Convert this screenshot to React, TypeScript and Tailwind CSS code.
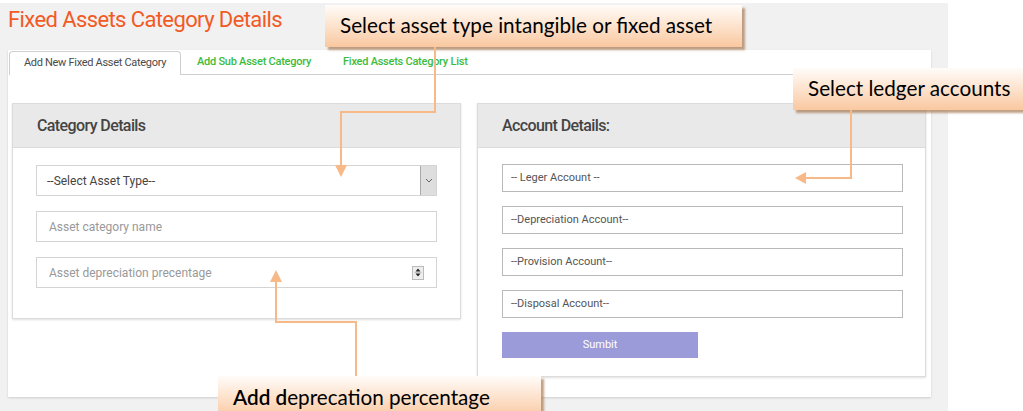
import { type ReactNode } from 'react';

const tabs = [
    { label: 'Add New Fixed Asset Category', active: true },
    { label: 'Add Sub Asset Category', active: false },
    { label: 'Fixed Assets Category List', active: false },
];

const accounts = ['-- Leger Account --', '--Depreciation Account--', '--Provision Account--', '--Disposal Account--'];

function Panel({ title, className, children }: { title: string; className: string; children: ReactNode }) {
    return (
        <div className={`w-[449px] border border-[#dcdcdc] bg-white shadow-[0_1px_2px_rgba(0,0,0,0.12)] ${className}`}>
            <div className="flex h-[44px] items-center border-b border-[#dcdcdc] bg-[#e9e9e9] pl-[24px] text-[16px] font-medium tracking-[-0.6px] text-[#444]">
                {title}
            </div>
            {children}
        </div>
    );
}

function Callout({ className, children }: { className: string; children: ReactNode }) {
    return (
        <div
            className={`absolute flex items-center bg-gradient-to-b from-[#fffcf9] to-[#f9c8a0] pl-[15px] font-['Lato'] text-[20.7px] text-black shadow-[3px_3px_2px_rgba(160,110,70,0.65)] ${className}`}
        >
            {children}
        </div>
    );
}

export default function App() {
    return (
        <div className="relative h-[411px] w-[1023px] overflow-hidden bg-white font-['Roboto',sans-serif]">
            <div className="mt-[3px] h-[408px] w-[948px] bg-[#f1f1f1] pl-[8px] pt-[4px]">
                {/* Page title */}
                <h1 className="h-[43px] text-[22px] leading-[26px] tracking-[-0.6px] text-[#f15a24]">
                    Fixed Assets Category Details
                </h1>

                {/* Main card */}
                <div className="h-[347px] w-[923px] bg-white shadow-[0_1px_2px_rgba(0,0,0,0.15)]">
                    <div className="ml-px mr-px flex h-[25px] items-end border-b border-[#cfcfcf] pt-px">
                        {tabs.map(tab =>
                            tab.active ? (
                                <div
                                    key={tab.label}
                                    className="-mb-px flex h-[24px] w-[172px] items-center justify-center rounded-t-[4px] border border-b-0 border-[#cfcfcf] bg-white text-[11px] tracking-[-0.3px] text-[#4a4a4a]"
                                >
                                    {tab.label}
                                </div>
                            ) : (
                                <div
                                    key={tab.label}
                                    className="flex h-[24px] items-center px-[16px] text-[11px] font-medium tracking-[-0.25px] text-[#3dbb3d]"
                                >
                                    {tab.label}
                                </div>
                            )
                        )}
                    </div>

                    <div className="flex items-start gap-[16px] pl-[4px] pt-[28px]">
                        {/* Category details */}
                        <Panel title="Category Details" className="h-[216px]">
                            <div className="flex flex-col gap-[15px] pl-[23px] pt-[17px]">
                                <div className="flex h-[31px] w-[401px] items-center justify-between border border-[#d4d4d4] pl-[10px] text-[12px] text-[#444]">
                                    <span>--Select Asset Type--</span>
                                    <span className="flex h-[29px] w-[16px] items-center justify-center border-l border-[#a9a9a9] bg-[#dedede]">
                                        <svg width="8" height="5" viewBox="0 0 8 5">
                                            <path d="M1 1l3 3 3-3" fill="none" stroke="#666" strokeWidth="1" />
                                        </svg>
                                    </span>
                                </div>
                                <div className="flex h-[31px] w-[401px] items-center border border-[#d4d4d4] pl-[12px] text-[12px] text-[#999]">
                                    Asset category name
                                </div>
                                <div className="flex h-[31px] w-[401px] items-center justify-between border border-[#d4d4d4] pl-[12px] pr-[12px] text-[12px] text-[#999]">
                                    <span>Asset depreciation precentage</span>
                                    <span className="flex h-[14px] w-[12px] flex-col items-center justify-center border border-[#bbb] bg-[#eee]">
                                        <svg width="8" height="11" viewBox="0 0 8 11">
                                            <path d="M4 1.5l2.5 3h-5z M4 9.5l2.5-3h-5z" fill="#222" />
                                            <path d="M0.5 5.5h7" stroke="#aaa" strokeWidth="0.6" />
                                        </svg>
                                    </span>
                                </div>
                            </div>
                        </Panel>

                        {/* Account details */}
                        <Panel title="Account Details:" className="h-[274px]">
                            <div className="flex flex-col gap-[14px] pl-[24px] pt-[16px]">
                                {accounts.map(acc => (
                                    <div
                                        key={acc}
                                        className="flex h-[28px] w-[401px] items-center border border-[#b9b9b9] pl-[8px] text-[11px] text-[#555]"
                                    >
                                        {acc}
                                    </div>
                                ))}
                                <button className="h-[26px] w-[196px] bg-[#9b9bda] text-[11px] text-white">Sumbit</button>
                            </div>
                        </Panel>
                    </div>
                </div>
            </div>

            {/* Annotation callouts */}
            <Callout className="left-[325px] top-[5px] h-[42px] w-[417px]">Select asset type intangible or fixed asset</Callout>
            <Callout className="left-[793px] top-[68px] h-[42px] w-[240px]">Select ledger accounts</Callout>
            <Callout className="left-[218px] top-[376px] h-[42px] w-[323px] items-start pt-[6px]">
                <span className="font-semibold">Add d</span>eprecation percentage
            </Callout>

            {/* Annotation arrows */}
            <svg className="pointer-events-none absolute inset-0" width="1023" height="411">
                <g fill="none" stroke="#f8b988" strokeWidth="2">
                    <polyline points="435,47 435,112 341,112 341,168" />
                    <polyline points="851,110 851,178 803,178" />
                    <polyline points="356,376 356,322 276,322 276,280" />
                </g>
                <g fill="#f8b988">
                    <polygon points="335,165 347,165 341,177" />
                    <polygon points="806,172 806,184 795,178" />
                    <polygon points="270,282 282,282 276,270" />
                </g>
            </svg>
        </div>
    );
}
